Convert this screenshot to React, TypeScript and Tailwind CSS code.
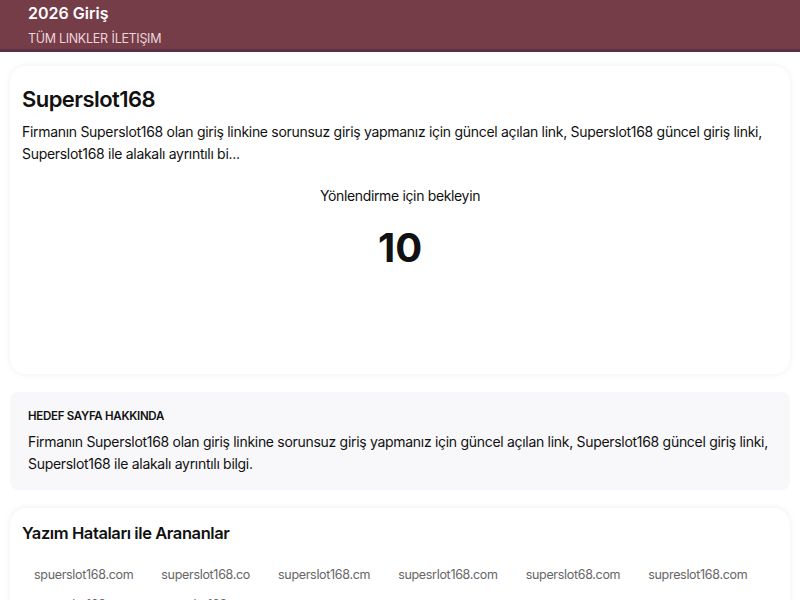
const typos = [
  'spuerslot168.com',
  'superslot168.co',
  'superslot168.cm',
  'supesrlot168.com',
  'superslot68.com',
  'supreslot168.com',
  'sueprslot168.com',
  'superlot168.com',
];

const desc =
  'Firmanın Superslot168 olan giriş linkine sorunsuz giriş yapmanız için güncel açılan link, Superslot168 güncel giriş linki, Superslot168 ile alakalı ayrıntılı bi...';

export default function App() {
  return (
    <div className="min-h-screen bg-white text-[#111] font-['Inter',sans-serif]">
      {/* Header */}
      <header className="bg-[#743d48] border-b-[3px] border-[#5b2f47] h-[52px] px-[28px]">
        <div className="text-white font-semibold text-[16px] leading-[26px]">2026 Giriş</div>
        <nav className="mt-[3px] flex gap-1 text-[12.5px] leading-[20px] text-[#efd3da] tracking-tight">
          <span>TÜM LINKLER</span>
          <span>İLETIŞIM</span>
        </nav>
      </header>

      <main className="px-[10px] pt-[14px] flex flex-col gap-[18px]">
        {/* Redirect card */}
        <section className="bg-white rounded-2xl shadow-[0_0_6px_rgba(0,0,0,0.07)] px-[12px] pt-[19px] h-[308px]">
          <h1 className="text-[22px] leading-[28px] font-semibold tracking-tight">Superslot168</h1>
          <p className="mt-[8px] text-[14px] leading-[22px] tracking-[-0.3px]">{desc}</p>
          <p className="mt-[21px] text-center text-[14px] leading-[20px] tracking-tight">Yönlendirme için bekleyin</p>
          <div className="mt-[18px] text-center text-[40px] leading-[48px] font-bold">10</div>
        </section>

        {/* About */}
        <section className="bg-[#f8f8fb] rounded-lg px-[18px] pt-[15px] pb-[15px]">
          <h2 className="text-[11.5px] leading-[18px] font-semibold uppercase tracking-tight">Hedef Sayfa Hakkında</h2>
          <p className="mt-[6px] text-[14px] leading-[22px] tracking-[-0.3px]">
            Firmanın Superslot168 olan giriş linkine sorunsuz giriş yapmanız için güncel açılan link, Superslot168 güncel giriş linki, Superslot168 ile alakalı ayrıntılı bilgi.
          </p>
        </section>

        {/* Typos */}
        <section className="bg-white rounded-2xl shadow-[0_0_6px_rgba(0,0,0,0.07)] px-[12px] pt-[13px] pb-4">
          <h2 className="text-[16.5px] leading-[24px] font-semibold tracking-tight">Yazım Hataları ile Arananlar</h2>
          <div className="mt-[18px] flex flex-wrap gap-x-[4px] gap-y-[6px]">
            {typos.map((t) => (
              <span key={t} className="px-[12px] text-[12.5px] leading-[24px] text-[#666] tracking-tight">
                {t}
              </span>
            ))}
          </div>
        </section>
      </main>
    </div>
  );
}
